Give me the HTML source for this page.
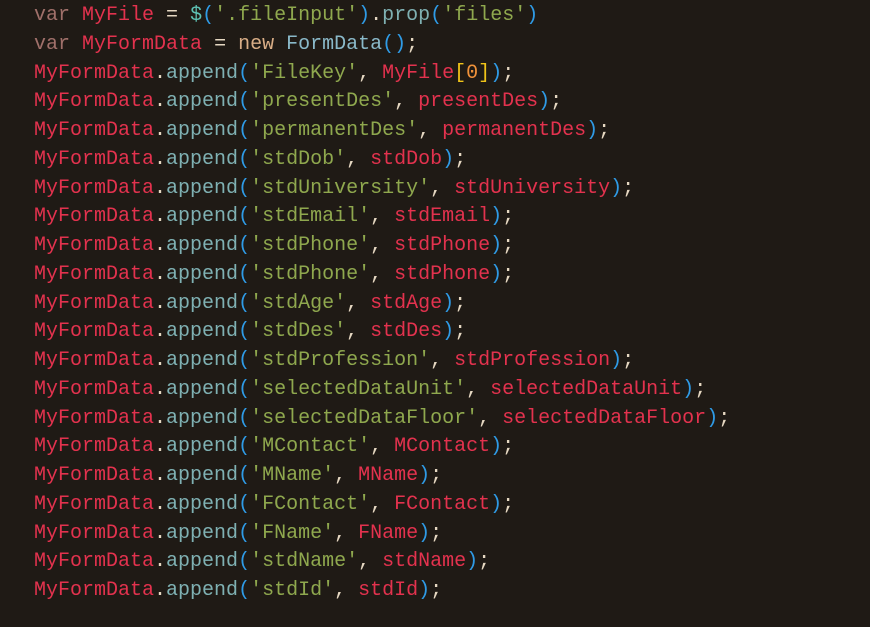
<!DOCTYPE html>
<html><head><meta charset="utf-8"><style>
html,body{margin:0;padding:0;background:#1f1a15;width:870px;height:627px;overflow:hidden}
pre{margin:0;padding:2px 0 0 34px;font-family:"Liberation Mono",monospace;font-size:20px;line-height:28.75px;color:#e6d8c2;white-space:pre}
.k{color:#a0706a}.v{color:#e3324e}.s{color:#8fa84e}.p{color:#2f9be6}.f{color:#7fb1b3}.n{color:#d8ad86}.c{color:#8ab9c9}.d{color:#5ec1b4}.y{color:#f0c419}.o{color:#f0923a}
</style></head><body><pre><span class="k">var</span> <span class="v">MyFile</span> = <span class="d">$</span><span class="p">(</span><span class="s">'.fileInput'</span><span class="p">)</span>.<span class="f">prop</span><span class="p">(</span><span class="s">'files'</span><span class="p">)</span>
<span class="k">var</span> <span class="v">MyFormData</span> = <span class="n">new</span> <span class="c">FormData</span><span class="p">()</span>;
<span class="v">MyFormData</span>.<span class="f">append</span><span class="p">(</span><span class="s">'FileKey'</span>, <span class="v">MyFile</span><span class="y">[</span><span class="o">0</span><span class="y">]</span><span class="p">)</span>;
<span class="v">MyFormData</span>.<span class="f">append</span><span class="p">(</span><span class="s">'presentDes'</span>, <span class="v">presentDes</span><span class="p">)</span>;
<span class="v">MyFormData</span>.<span class="f">append</span><span class="p">(</span><span class="s">'permanentDes'</span>, <span class="v">permanentDes</span><span class="p">)</span>;
<span class="v">MyFormData</span>.<span class="f">append</span><span class="p">(</span><span class="s">'stdDob'</span>, <span class="v">stdDob</span><span class="p">)</span>;
<span class="v">MyFormData</span>.<span class="f">append</span><span class="p">(</span><span class="s">'stdUniversity'</span>, <span class="v">stdUniversity</span><span class="p">)</span>;
<span class="v">MyFormData</span>.<span class="f">append</span><span class="p">(</span><span class="s">'stdEmail'</span>, <span class="v">stdEmail</span><span class="p">)</span>;
<span class="v">MyFormData</span>.<span class="f">append</span><span class="p">(</span><span class="s">'stdPhone'</span>, <span class="v">stdPhone</span><span class="p">)</span>;
<span class="v">MyFormData</span>.<span class="f">append</span><span class="p">(</span><span class="s">'stdPhone'</span>, <span class="v">stdPhone</span><span class="p">)</span>;
<span class="v">MyFormData</span>.<span class="f">append</span><span class="p">(</span><span class="s">'stdAge'</span>, <span class="v">stdAge</span><span class="p">)</span>;
<span class="v">MyFormData</span>.<span class="f">append</span><span class="p">(</span><span class="s">'stdDes'</span>, <span class="v">stdDes</span><span class="p">)</span>;
<span class="v">MyFormData</span>.<span class="f">append</span><span class="p">(</span><span class="s">'stdProfession'</span>, <span class="v">stdProfession</span><span class="p">)</span>;
<span class="v">MyFormData</span>.<span class="f">append</span><span class="p">(</span><span class="s">'selectedDataUnit'</span>, <span class="v">selectedDataUnit</span><span class="p">)</span>;
<span class="v">MyFormData</span>.<span class="f">append</span><span class="p">(</span><span class="s">'selectedDataFloor'</span>, <span class="v">selectedDataFloor</span><span class="p">)</span>;
<span class="v">MyFormData</span>.<span class="f">append</span><span class="p">(</span><span class="s">'MContact'</span>, <span class="v">MContact</span><span class="p">)</span>;
<span class="v">MyFormData</span>.<span class="f">append</span><span class="p">(</span><span class="s">'MName'</span>, <span class="v">MName</span><span class="p">)</span>;
<span class="v">MyFormData</span>.<span class="f">append</span><span class="p">(</span><span class="s">'FContact'</span>, <span class="v">FContact</span><span class="p">)</span>;
<span class="v">MyFormData</span>.<span class="f">append</span><span class="p">(</span><span class="s">'FName'</span>, <span class="v">FName</span><span class="p">)</span>;
<span class="v">MyFormData</span>.<span class="f">append</span><span class="p">(</span><span class="s">'stdName'</span>, <span class="v">stdName</span><span class="p">)</span>;
<span class="v">MyFormData</span>.<span class="f">append</span><span class="p">(</span><span class="s">'stdId'</span>, <span class="v">stdId</span><span class="p">)</span>;
</pre></body></html>
